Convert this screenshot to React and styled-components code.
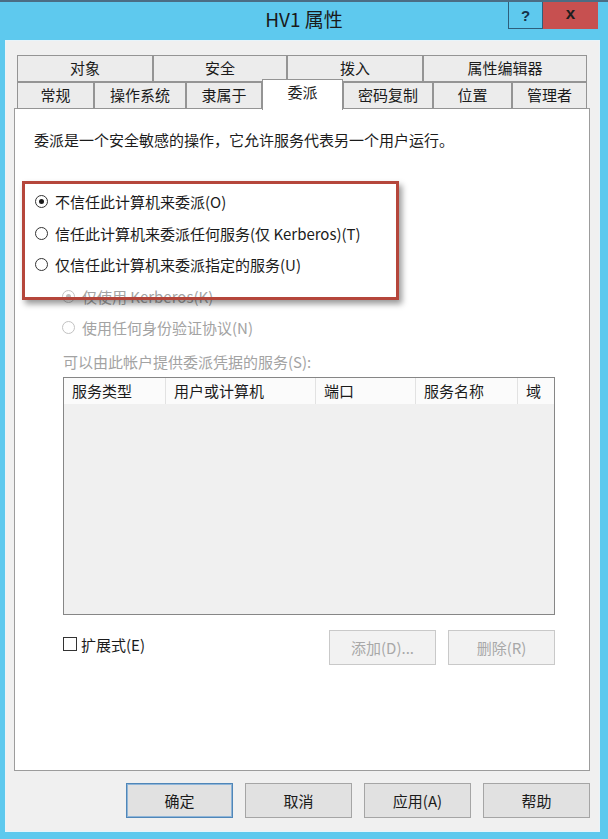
import React from "react";
import styled, { createGlobalStyle } from "styled-components";

const GlobalStyle = createGlobalStyle`
  html, body {
    margin: 0;
    padding: 0;
    background: #5ec9ee;
  }
  * {
    box-sizing: border-box;
  }
`;

const font = `"Noto Sans CJK SC", "Noto Sans", sans-serif`;

const topTabs = [
  { label: "对象", w: 136 },
  { label: "安全", w: 134 },
  { label: "拨入", w: 136 },
  { label: "属性编辑器", w: 164 },
];

const bottomTabs = [
  { label: "常规", w: 77 },
  { label: "操作系统", w: 92 },
  { label: "隶属于", w: 76 },
  { label: "委派", w: 81, active: true },
  { label: "密码复制", w: 90 },
  { label: "位置", w: 79 },
  { label: "管理者", w: 75 },
];

const columns = [
  { label: "服务类型", w: 102 },
  { label: "用户或计算机", w: 150 },
  { label: "端口", w: 100 },
  { label: "服务名称", w: 102 },
  { label: "域", w: 36 },
];

const App = () => {
  return (
    <>
      <GlobalStyle />
      <Window>
        <TitleBar>
          <span />
          <Title>HV1 属性</Title>
          <Controls>
            <HelpButton>?</HelpButton>
            <CloseButton>x</CloseButton>
          </Controls>
        </TitleBar>

        <Client>
          <Tabs>
            <TabRow>
              {topTabs.map((t) => (
                <Tab key={t.label} $w={t.w}>
                  {t.label}
                </Tab>
              ))}
            </TabRow>
            <TabRow>
              {bottomTabs.map((t) => (
                <Tab key={t.label} $w={t.w} $active={t.active}>
                  {t.label}
                </Tab>
              ))}
            </TabRow>
          </Tabs>

          <Panel>
            <Intro>委派是一个安全敏感的操作，它允许服务代表另一个用户运行。</Intro>

            <Options>
              <Option>
                <Radio $checked />
                不信任此计算机来委派(O)
              </Option>
              <Option>
                <Radio />
                信任此计算机来委派任何服务(仅 Kerberos)(T)
              </Option>
              <Option>
                <Radio />
                仅信任此计算机来委派指定的服务(U)
              </Option>
              <Option $indent $disabled>
                <Radio $checked $disabled />
                仅使用 Kerberos(K)
              </Option>
              <Option $indent $disabled>
                <Radio $disabled />
                使用任何身份验证协议(N)
              </Option>
            </Options>

            <Caption>可以由此帐户提供委派凭据的服务(S):</Caption>

            <Table>
              <HeaderRow>
                {columns.map((c) => (
                  <HeaderCell key={c.label} $w={c.w}>
                    {c.label}
                  </HeaderCell>
                ))}
              </HeaderRow>
            </Table>

            <TableActions>
              <CheckLabel>
                <CheckBox />
                扩展式(E)
              </CheckLabel>
              <ActionButtons>
                <Button $disabled>添加(D)...</Button>
                <Button $disabled>删除(R)</Button>
              </ActionButtons>
            </TableActions>

            <Highlight />
          </Panel>

          <Footer>
            <Button $default>确定</Button>
            <Button>取消</Button>
            <Button>应用(A)</Button>
            <Button>帮助</Button>
          </Footer>
        </Client>
      </Window>
    </>
  );
};

const Window = styled.div`
  width: 608px;
  height: 839px;
  background: #5ec9ee;
  border-top: 2px solid #4b6d84;
  display: flex;
  flex-direction: column;
  font-family: ${font};
  color: #1b1b1b;
`;

const TitleBar = styled.div`
  height: 38px;
  display: grid;
  grid-template-columns: 1fr auto 1fr;
  align-items: start;
`;

const Title = styled.div`
  font-size: 19px;
  line-height: 40px;
  margin-top: -3px;
  color: #1a1a1a;
`;

const Controls = styled.div`
  display: flex;
  justify-content: flex-end;
  padding-right: 10px;
`;

const HelpButton = styled.div`
  width: 35px;
  height: 27px;
  border: 1px solid #2e5f7c;
  border-top: none;
  color: #16324a;
  font-family: "Liberation Sans", sans-serif;
  font-weight: bold;
  font-size: 15px;
  display: flex;
  align-items: center;
  justify-content: center;
`;

const CloseButton = styled.div`
  width: 55px;
  height: 27px;
  background: #c75050;
  color: #1e1e1e;
  font-family: "Liberation Sans", sans-serif;
  font-weight: bold;
  font-size: 17px;
  display: flex;
  align-items: center;
  justify-content: center;
  padding-bottom: 3px;
`;

const Client = styled.div`
  flex: 1;
  margin: 0 8px 7px 5px;
  background: #f0f0f0;
  border: 1px solid #e8f4fa;
  padding: 14px 9px 12px 8px;
  display: flex;
  flex-direction: column;
`;

const Tabs = styled.div`
  margin: 0 3px;
  display: flex;
  flex-direction: column;
  position: relative;
  z-index: 1;
  margin-bottom: -1px;
`;

const TabRow = styled.div`
  display: flex;
  height: 27px;
  align-items: flex-end;
`;

const Tab = styled.div`
  width: ${(p) => p.$w}px;
  height: ${(p) => (p.$active ? 31 : 27)}px;
  border: 1px solid #949494;
  border-bottom: ${(p) => (p.$active ? "none" : "1px solid #949494")};
  background: ${(p) => (p.$active ? "#ffffff" : "#ececec")};
  font-size: 15px;
  line-height: 24px;
  text-align: center;
  margin-bottom: ${(p) => (p.$active ? "-1px" : "0")};
  padding-bottom: ${(p) => (p.$active ? "4px" : "0")};
  position: relative;
  z-index: ${(p) => (p.$active ? 2 : 1)};
`;

const Panel = styled.div`
  height: 663px;
  background: #ffffff;
  border: 1px solid #9c9c9c;
  padding: 21px 19px 0 19px;
  position: relative;
  display: flex;
  flex-direction: column;
`;

const Intro = styled.div`
  font-size: 15px;
  line-height: 20px;
`;

const Options = styled.div`
  margin-top: 36px;
  display: flex;
  flex-direction: column;
`;

const Option = styled.label`
  height: 31.5px;
  display: flex;
  align-items: center;
  gap: 7px;
  font-size: 15px;
  padding-left: ${(p) => (p.$indent ? "28px" : "1px")};
  color: ${(p) => (p.$disabled ? "#a3a3a3" : "#1b1b1b")};
`;

const Radio = styled.span`
  width: 13px;
  height: 13px;
  border-radius: 50%;
  border: 1px solid ${(p) => (p.$disabled ? "#c2c2c2" : "#333333")};
  background: #ffffff;
  display: flex;
  align-items: center;
  justify-content: center;
  flex-shrink: 0;

  &::after {
    content: "";
    width: 5px;
    height: 5px;
    border-radius: 50%;
    background: ${(p) => (p.$disabled ? "#bdbdbd" : "#1b1b1b")};
    display: ${(p) => (p.$checked ? "block" : "none")};
  }
`;

const Caption = styled.div`
  margin: 8px 0 0 29px;
  font-size: 15px;
  line-height: 20px;
  color: #a3a3a3;
`;

const Table = styled.div`
  margin: 5px 0 0 29px;
  width: 492px;
  height: 238px;
  border: 1px solid #868686;
  background: #f0f0f0;
`;

const HeaderRow = styled.div`
  display: flex;
  height: 26px;
  background: #fbfbfb;
`;

const HeaderCell = styled.div`
  width: ${(p) => p.$w}px;
  border-right: 1px solid #e2e2e2;
  padding-left: 8px;
  font-size: 15px;
  line-height: 26px;

  &:last-child {
    border-right: none;
    flex: 1;
  }
`;

const TableActions = styled.div`
  margin: 15px 0 0 29px;
  width: 492px;
  display: flex;
  align-items: center;
  justify-content: space-between;
`;

const CheckLabel = styled.label`
  display: flex;
  align-items: center;
  gap: 4px;
  font-size: 15px;
  margin-top: -6px;
`;

const CheckBox = styled.span`
  width: 14px;
  height: 14px;
  border: 1px solid #333333;
  background: #ffffff;
`;

const ActionButtons = styled.div`
  display: flex;
  gap: 12px;
`;

const Button = styled.div`
  width: 107px;
  height: 35px;
  display: flex;
  align-items: center;
  justify-content: center;
  font-size: 15px;
  background: ${(p) => (p.$disabled ? "#f2f2f2" : "#e1e1e1")};
  border: 1px solid
    ${(p) => (p.$disabled ? "#c9c9c9" : p.$default ? "#4f86b8" : "#a5a5a5")};
  box-shadow: ${(p) => (p.$default ? "inset 0 0 0 1px #8fb5d8" : "none")};
  color: ${(p) => (p.$disabled ? "#a8a8a8" : "#1b1b1b")};
`;

const Footer = styled.div`
  margin-top: 12px;
  display: flex;
  justify-content: flex-end;
  gap: 12px;
`;

/* red annotation frame drawn over the dialog */
const Highlight = styled.div`
  position: absolute;
  left: 7px;
  top: 72px;
  width: 377px;
  height: 119px;
  border: 3px solid #b5463b;
  box-shadow: 3px 4px 6px rgba(0, 0, 0, 0.4);
  pointer-events: none;
`;

export default App;
